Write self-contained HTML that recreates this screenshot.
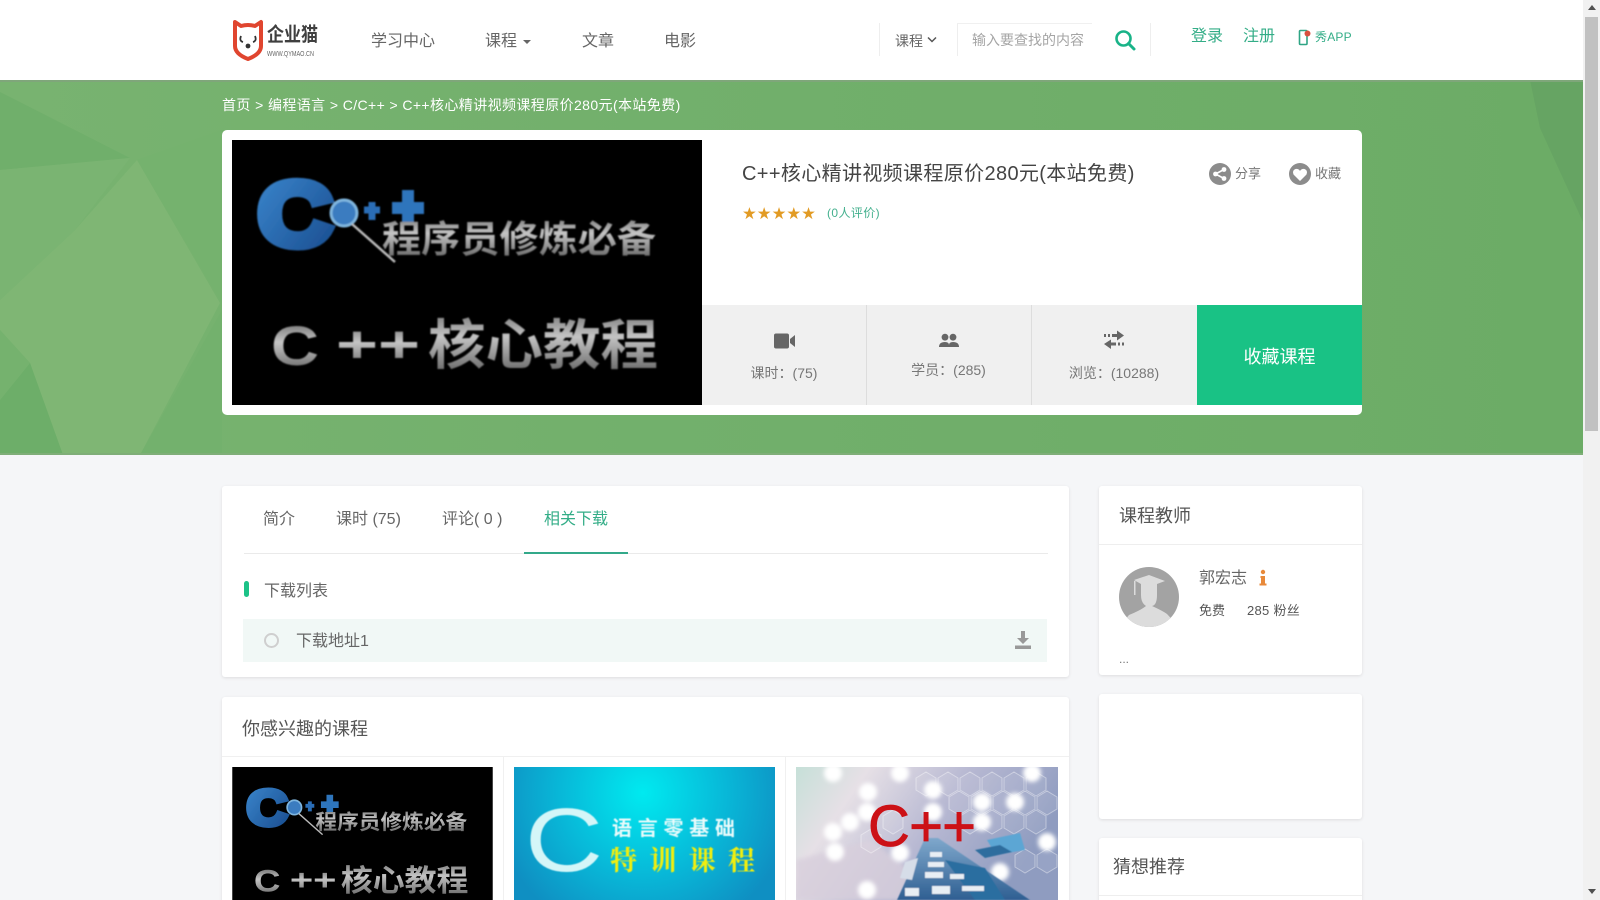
<!DOCTYPE html>
<html lang="zh"><head><meta charset="utf-8"><title>C++核心精讲视频课程</title>
<style>
*{box-sizing:border-box;margin:0;padding:0}
html,body{width:1600px;height:900px;overflow:hidden;background:#f5f6f8}
body{position:relative;font-family:"Liberation Sans","Noto Sans CJK SC",sans-serif;color:#666}
.t{position:absolute;white-space:nowrap;line-height:20px}
.b{position:absolute}
.p{position:absolute;background:#fff;border-radius:3px;box-shadow:0 1px 3px rgba(0,0,0,.1)}
svg{position:absolute;display:block;overflow:hidden}
</style></head><body>

<!-- hero -->
<svg style="left:0;top:80px" width="1583" height="375" viewBox="0 80 1583 375">
<defs><linearGradient id="hg" x1="0" x2="1" y1="0" y2="0"><stop offset="0" stop-color="#78b370"/><stop offset=".5" stop-color="#71af6b"/><stop offset="1" stop-color="#6cac66"/></linearGradient></defs>
<rect x="0" y="80" width="1583" height="375" fill="url(#hg)"/>
<polygon points="0,92 130,158 0,170" fill="#70af6b"/>
<polygon points="137,160 222,130 222,303" fill="#75b26e"/>
<polygon points="137,160 220,303 140,455 63,455 30,363 0,330 0,300 75,230" fill="#7fb674"/>
<polygon points="0,170 130,158 75,230 0,300" fill="#7ab472"/>
<polygon points="0,400 30,363 63,455 0,455" fill="#6dae69"/>
<polygon points="140,455 222,310 222,455" fill="#73b16d"/>
<polygon points="0,330 30,363 0,400" fill="#75b26e"/>
<polygon points="1530,80 1583,80 1583,222 1540,128" fill="#66a463"/>
<rect x="0" y="80" width="1583" height="2" fill="#7fa67a"/>
<rect x="0" y="453" width="1583" height="2" fill="#7fae78"/>
</svg>

<!-- header -->
<div class="b" style="left:0;top:0;width:1583px;height:80px;background:#fff"></div>
<svg style="left:232px;top:18px" width="32" height="44" viewBox="0 0 32 44">
<path d="M3 4 L9 8 Q16 6 23 8 L29 4 V28 Q29 36 16 41 Q3 36 3 28 Z" fill="#fff" stroke="#e0452f" stroke-width="4" stroke-linejoin="round"/>
<path d="M9 18 Q7 23 11 24 M23 18 Q25 23 21 24" fill="none" stroke="#333" stroke-width="1.8"/>
<circle cx="16" cy="28" r="2.4" fill="#333"/>
</svg>
<div class="t" style="left:267px;top:24px;font-size:17px;font-weight:700;color:#3f3f3f;line-height:22px;transform:scale(1,1.15);transform-origin:0 50%">企业猫</div>
<div class="t" style="left:267px;top:50px;font-size:7px;color:#666;line-height:10px;transform:scale(.79,1);transform-origin:0 50%">WWW.QYMAO.CN</div>

<div class="t" style="left:371px;top:32px;font-size:16px;color:#666">学习中心</div>
<div class="t" style="left:485px;top:32px;font-size:16px;color:#666">课程</div>
<div class="b" style="left:523px;top:40px;border:4px solid transparent;border-top:4px solid #666;border-bottom:0"></div>
<div class="t" style="left:582px;top:32px;font-size:16px;color:#666">文章</div>
<div class="t" style="left:664px;top:32px;font-size:16px;color:#666">电影</div>

<div class="b" style="left:879px;top:23px;width:1px;height:33px;background:#eee"></div>
<div class="b" style="left:957px;top:23px;width:1px;height:33px;background:#eee"></div>
<div class="b" style="left:957px;top:23px;width:135px;height:1px;background:#f0f0f0"></div>
<div class="b" style="left:1150px;top:23px;width:1px;height:33px;background:#eee"></div>
<div class="t" style="left:895px;top:31px;font-size:14px;color:#666">课程</div>
<svg style="left:927px;top:36px" width="10" height="8" viewBox="0 0 10 8"><path d="M1 1.5 L5 5.5 L9 1.5" fill="none" stroke="#555" stroke-width="1.5"/></svg>
<div class="t" style="left:972px;top:30px;font-size:14px;color:#a5a5a5">输入要查找的内容</div>
<svg style="left:1113px;top:28px" width="24" height="24" viewBox="0 0 24 24"><circle cx="10.5" cy="10.5" r="7" fill="none" stroke="#19b388" stroke-width="2.6"/><path d="M15.5 15.5 L21 21" stroke="#19b388" stroke-width="3" stroke-linecap="round"/></svg>
<div class="t" style="left:1191px;top:27px;font-size:16px;color:#33ad87">登录</div>
<div class="t" style="left:1243px;top:27px;font-size:16px;color:#33ad87">注册</div>
<svg style="left:1298px;top:29px" width="14" height="17" viewBox="0 0 14 17"><rect x="1.5" y="1.5" width="7.5" height="14" rx="1" fill="#fff" stroke="#2fa585" stroke-width="1.6"/><circle cx="9.5" cy="4.5" r="3" fill="#d8503f"/></svg>
<div class="t" style="left:1315px;top:27px;font-size:12px;color:#33ad87;letter-spacing:.2px">秀APP</div>

<!-- breadcrumb -->
<div class="t" style="left:222px;top:95px;font-size:14px;color:#fff;letter-spacing:.4px">首页 &gt; 编程语言 &gt; C/C++ &gt; C++核心精讲视频课程原价280元(本站免费)</div>

<!-- course card -->
<div class="b" style="left:222px;top:130px;width:1140px;height:285px;background:#fff;border-radius:5px"></div>
<svg style="left:232px;top:140px" width="470" height="265" viewBox="0 0 470 265">
<defs>
<linearGradient id="si" x1="0" y1="0" x2="0" y2="1"><stop offset="0" stop-color="#555"/><stop offset=".45" stop-color="#c4c4c4"/><stop offset="1" stop-color="#555"/></linearGradient>
<linearGradient id="bl" x1="0" y1="0" x2="1" y2="1"><stop offset="0" stop-color="#3b88cf"/><stop offset="1" stop-color="#184a8c"/></linearGradient>
<filter id="sb"><feGaussianBlur stdDeviation=".7"/></filter>
</defs>
<rect width="470" height="265" fill="#000"/>
<g filter="url(#sb)">
<text x="26" y="105" font-family="Liberation Sans" font-weight="700" font-size="90" fill="url(#bl)" stroke="url(#bl)" stroke-width="9" textLength="74" lengthAdjust="spacingAndGlyphs">C</text>
<circle cx="112" cy="73" r="13" fill="#3a7cc0" stroke="#7fb5de" stroke-width="3"/>
<path d="M120 84 L163 122" stroke="#bbb" stroke-width="2.5"/>
<path d="M132 70 H148 M140 62 V80" stroke="#2c6db6" stroke-width="7"/>
<path d="M160 68 H192 M176 50 V84" stroke="#2f74bc" stroke-width="12"/>
<text x="150" y="112" font-family="Noto Sans CJK SC" font-weight="700" font-size="37" fill="url(#si)" textLength="274" lengthAdjust="spacingAndGlyphs">程序员修炼必备</text>
<text x="39" y="225" font-family="Liberation Sans" font-weight="700" font-size="56" fill="url(#si)" textLength="48" lengthAdjust="spacingAndGlyphs">C</text>
<text x="104" y="222" font-family="Liberation Sans" font-weight="700" font-size="52" fill="url(#si)" textLength="84" lengthAdjust="spacingAndGlyphs">++</text>
<text x="196" y="224" font-family="Noto Sans CJK SC" font-weight="700" font-size="54" fill="url(#si)" textLength="230" lengthAdjust="spacingAndGlyphs">核心教程</text>
</g>
</svg>

<div class="t" style="left:742px;top:163px;font-size:20px;line-height:22px;color:#444;letter-spacing:.36px">C++核心精讲视频课程原价280元(本站免费)</div>
<div class="t" style="left:742px;top:204px;font-size:16.5px;color:#e29b24;line-height:20px"><span style="font-family:'DejaVu Sans'">★★★★★</span></div>
<div class="t" style="left:827px;top:203px;font-size:12px;color:#44b08e;letter-spacing:.4px">(0人评价)</div>

<svg style="left:1208px;top:162px" width="24" height="24" viewBox="0 0 24 24"><circle cx="12" cy="12" r="11" fill="#8c8c8c"/><circle cx="7.5" cy="12" r="2.4" fill="#fff"/><circle cx="16" cy="7.5" r="2.4" fill="#fff"/><circle cx="16" cy="16.5" r="2.4" fill="#fff"/><path d="M7.5 12 L16 7.5 M7.5 12 L16 16.5" stroke="#fff" stroke-width="1.6"/></svg>
<div class="t" style="left:1235px;top:164px;font-size:13px;color:#777">分享</div>
<svg style="left:1288px;top:162px" width="24" height="24" viewBox="0 0 24 24"><circle cx="12" cy="12" r="11" fill="#8c8c8c"/><path d="M12 19 L5.5 12.5 Q3.8 8.5 7.5 7 Q10.5 6.5 12 9 Q13.5 6.5 16.5 7 Q20.2 8.5 18.5 12.5 Z" fill="#fff"/></svg>
<div class="t" style="left:1315px;top:164px;font-size:13px;color:#777">收藏</div>

<div class="b" style="left:702px;top:305px;width:495px;height:100px;background:#f0f0f0"></div>
<div class="b" style="left:866px;top:305px;width:1px;height:100px;background:#ddd"></div>
<div class="b" style="left:1031px;top:305px;width:1px;height:100px;background:#ddd"></div>
<div class="b" style="left:1197px;top:305px;width:165px;height:100px;background:#19c285"></div>
<div class="t" style="left:1197px;top:347px;width:165px;text-align:center;font-size:18px;color:#fff">收藏课程</div>

<svg style="left:773px;top:332px" width="23" height="18" viewBox="0 0 23 18"><rect x="1" y="1.5" width="15" height="15" rx="2" fill="#666"/><path d="M17 7 L22 3 V15 L17 11 Z" fill="#666"/></svg>
<svg style="left:938px;top:333px" width="22" height="16" viewBox="0 0 22 16"><circle cx="7" cy="4.2" r="3.4" fill="#666"/><circle cx="15" cy="4.2" r="3.4" fill="#666"/><path d="M1 14 Q1 9 7 9 Q11 9 11 12 Q11 9 15 9 Q21 9 21 14 Z" fill="#666"/></svg>
<svg style="left:1103px;top:329px" width="22" height="22" viewBox="0 0 22 22"><path d="M1 6.5 H3 M5 6.5 H7 M9 6.5 H14" stroke="#666" stroke-width="3"/><path d="M14 1.5 L21 6.5 L14 11.5 Z" fill="#666"/><path d="M21 15 H19 M17 15 H15 M13 15 H8" stroke="#666" stroke-width="3"/><path d="M8 10.5 L1 15 L8 20 Z" fill="#666"/></svg>
<div class="t" style="left:702px;top:363px;width:164px;text-align:center;font-size:14px;color:#777">课时：(75)</div>
<div class="t" style="left:866px;top:360px;width:165px;text-align:center;font-size:14px;color:#777">学员：(285)</div>
<div class="t" style="left:1031px;top:363px;width:166px;text-align:center;font-size:14px;color:#777">浏览：(10288)</div>

<!-- tabs panel -->
<div class="p" style="left:222px;top:486px;width:847px;height:191px"></div>
<div class="t" style="left:263px;top:510px;font-size:16px">简介</div>
<div class="t" style="left:336px;top:510px;font-size:16px">课时 (75)</div>
<div class="t" style="left:442px;top:510px;font-size:16px">评论( 0 )</div>
<div class="t" style="left:544px;top:510px;font-size:16px;color:#33ad87">相关下载</div>
<div class="b" style="left:244px;top:553px;width:804px;height:1px;background:#eaeaea"></div>
<div class="b" style="left:524px;top:552px;width:104px;height:1.5px;background:#33a98a"></div>
<div class="b" style="left:244px;top:581px;width:5px;height:16px;background:#1cc287;border-radius:2.5px"></div>
<div class="t" style="left:264px;top:582px;font-size:16px">下载列表</div>
<div class="b" style="left:243px;top:619px;width:804px;height:43px;background:#f1f8f6"></div>
<div class="b" style="left:264px;top:633px;width:15px;height:15px;border:2px solid #cfcfcf;border-radius:50%"></div>
<div class="t" style="left:296px;top:632px;font-size:16px">下载地址1</div>
<svg style="left:1014px;top:630px" width="18" height="20" viewBox="0 0 18 20"><path d="M7 1 H11 V8 H15 L9 14 L3 8 H7 Z" fill="#999"/><rect x="1" y="15.5" width="16" height="3.5" fill="#999"/></svg>

<!-- interest panel -->
<div class="p" style="left:222px;top:697px;width:847px;height:230px"></div>
<div class="t" style="left:242px;top:719px;font-size:18px;color:#555">你感兴趣的课程</div>
<div class="b" style="left:222px;top:756px;width:847px;height:1px;background:#f0f0f0"></div>
<div class="b" style="left:503px;top:756px;width:1px;height:144px;background:#f0f0f0"></div>
<div class="b" style="left:785px;top:756px;width:1px;height:144px;background:#f0f0f0"></div>

<svg style="left:232px;top:767px" width="261" height="133" viewBox="0 0 470 240">
<rect width="470" height="240" fill="#000"/>
<g filter="url(#sb)">
<text x="26" y="105" font-family="Liberation Sans" font-weight="700" font-size="90" fill="url(#bl)" stroke="url(#bl)" stroke-width="9" textLength="74" lengthAdjust="spacingAndGlyphs">C</text>
<circle cx="112" cy="73" r="13" fill="#3a7cc0" stroke="#7fb5de" stroke-width="3"/>
<path d="M120 84 L163 122" stroke="#bbb" stroke-width="2.5"/>
<path d="M132 70 H148 M140 62 V80" stroke="#2c6db6" stroke-width="7"/>
<path d="M160 68 H192 M176 50 V84" stroke="#2f74bc" stroke-width="12"/>
<text x="150" y="112" font-family="Noto Sans CJK SC" font-weight="700" font-size="37" fill="url(#si)" textLength="274" lengthAdjust="spacingAndGlyphs">程序员修炼必备</text>
<text x="39" y="225" font-family="Liberation Sans" font-weight="700" font-size="56" fill="url(#si)" textLength="48" lengthAdjust="spacingAndGlyphs">C</text>
<text x="104" y="222" font-family="Liberation Sans" font-weight="700" font-size="52" fill="url(#si)" textLength="84" lengthAdjust="spacingAndGlyphs">++</text>
<text x="196" y="224" font-family="Noto Sans CJK SC" font-weight="700" font-size="54" fill="url(#si)" textLength="230" lengthAdjust="spacingAndGlyphs">核心教程</text>
</g>
</svg>

<svg style="left:514px;top:767px" width="261" height="133" viewBox="514 767 261 133">
<defs><radialGradient id="cy" gradientUnits="userSpaceOnUse" cx="643" cy="793" r="150"><stop offset="0" stop-color="#00eaf0"/><stop offset=".55" stop-color="#08b8d8"/><stop offset="1" stop-color="#0f8fc2"/></radialGradient>
<filter id="s2"><feGaussianBlur stdDeviation=".4"/></filter></defs>
<rect x="514" y="767" width="261" height="133" fill="url(#cy)"/>
<g filter="url(#s2)">
<text x="525" y="871" font-family="Liberation Sans" font-size="90" fill="#d4f6f8" textLength="78" lengthAdjust="spacingAndGlyphs">C</text>
<text x="612" y="835" font-family="Noto Sans CJK SC" font-weight="700" font-size="20" fill="#e8fbfb" textLength="123" lengthAdjust="spacing">语言零基础</text>
<text x="610" y="870" font-family="Noto Serif CJK SC" font-weight="700" font-size="27" fill="#f1ee10" textLength="145" lengthAdjust="spacing">特训课程</text>
</g>
</svg>

<svg style="left:796px;top:767px" width="262" height="133" viewBox="796 767 262 133">
<defs><linearGradient id="lv" x1="0" y1="0" x2="1" y2=".35"><stop offset="0" stop-color="#c6e0d8"/><stop offset=".25" stop-color="#e6e0e6"/><stop offset=".6" stop-color="#b7b8d2"/><stop offset="1" stop-color="#8f9cc0"/></linearGradient>
<linearGradient id="cb" x1="0" y1="0" x2="0" y2="1"><stop offset="0" stop-color="#7fa8cc"/><stop offset="1" stop-color="#2f5f92"/></linearGradient>
<filter id="bb"><feGaussianBlur stdDeviation="2"/></filter><filter id="b1"><feGaussianBlur stdDeviation=".6"/></filter></defs>
<rect x="796" y="767" width="262" height="133" fill="url(#lv)"/>
<polygon points="796,860 870,840 950,900 796,900" fill="#d8cfdc" opacity=".8" filter="url(#bb)"/>
<g fill="#fff" fill-opacity=".08" stroke="#fff" stroke-opacity=".4" stroke-width="1">
<path d="M916 778 l10 -6 l10 6 v12 l-10 6 l-10 -6z M938 778 l10 -6 l10 6 v12 l-10 6 l-10 -6z M960 778 l10 -6 l10 6 v12 l-10 6 l-10 -6z M982 778 l10 -6 l10 6 v12 l-10 6 l-10 -6z M1004 778 l10 -6 l10 6 v12 l-10 6 l-10 -6z M1026 778 l10 -6 l10 6 v12 l-10 6 l-10 -6z M949 797 l10 -6 l10 6 v12 l-10 6 l-10 -6z M971 797 l10 -6 l10 6 v12 l-10 6 l-10 -6z M993 797 l10 -6 l10 6 v12 l-10 6 l-10 -6z M1015 797 l10 -6 l10 6 v12 l-10 6 l-10 -6z M1037 797 l10 -6 l10 6 v12 l-10 6 l-10 -6z M960 816 l10 -6 l10 6 v12 l-10 6 l-10 -6z M982 816 l10 -6 l10 6 v12 l-10 6 l-10 -6z M1004 816 l10 -6 l10 6 v12 l-10 6 l-10 -6z M1026 816 l10 -6 l10 6 v12 l-10 6 l-10 -6z M1015 855 l10 -6 l10 6 v12 l-10 6 l-10 -6z M1037 855 l10 -6 l10 6 v12 l-10 6 l-10 -6z M883 816 l10 -6 l10 6 v12 l-10 6 l-10 -6z M861 835 l10 -6 l10 6 v12 l-10 6 l-10 -6z"/>
</g>
<g fill="#fff" filter="url(#bb)">
<circle cx="833" cy="773" r="9"/><circle cx="900" cy="773" r="9"/><circle cx="1032" cy="773" r="9"/><circle cx="868" cy="792" r="9"/><circle cx="933" cy="790" r="9"/><circle cx="982" cy="802" r="9"/><circle cx="1015" cy="802" r="9"/><circle cx="867" cy="812" r="9"/><circle cx="933" cy="812" r="9"/><circle cx="850" cy="822" r="9"/><circle cx="833" cy="832" r="9"/><circle cx="835" cy="852" r="9"/><circle cx="982" cy="822" r="9"/><circle cx="1047" cy="842" r="9"/><circle cx="900" cy="853" r="9"/><circle cx="1000" cy="872" r="9"/><circle cx="867" cy="890" r="9"/>
</g>
<g filter="url(#b1)">
<polygon points="925,838 938,838 1030,900 897,900" fill="url(#cb)"/>
<polygon points="945,860 985,868 1005,900 975,900" fill="#2b6ea0"/>
<polygon points="987,840 1020,833 1025,850 996,855" fill="#5ba6d4"/>
<polygon points="1000,845 1012,852 985,858 975,850" fill="#2f6d9e"/>
<g fill="#e8eef4">
<rect x="930" y="852" width="12" height="5"/><rect x="928" y="862" width="16" height="5"/><rect x="925" y="872" width="18" height="6"/><rect x="932" y="886" width="18" height="8"/><rect x="905" y="888" width="14" height="8"/><rect x="950" y="874" width="14" height="5"/><rect x="962" y="886" width="22" height="5"/>
</g>
<polygon points="905,862 918,858 912,880 900,878" fill="#d6dde8"/>
</g>
<text x="868" y="846" font-family="Liberation Sans" font-size="58" fill="#cc1116" stroke="#cc1116" stroke-width=".8" textLength="108" lengthAdjust="spacing">C++</text>
</svg>

<!-- right column -->
<div class="p" style="left:1099px;top:486px;width:263px;height:189px"></div>
<div class="t" style="left:1119px;top:506px;font-size:18px;color:#555">课程教师</div>
<div class="b" style="left:1099px;top:544px;width:263px;height:1px;background:#eeeeee"></div>
<svg style="left:1119px;top:567px" width="60" height="60" viewBox="0 0 60 60">
<defs><clipPath id="ac"><circle cx="30" cy="30" r="30"/></clipPath></defs>
<g clip-path="url(#ac)"><rect width="60" height="60" fill="#a3a3a3"/>
<path d="M15 13 L30 8 L46 14 L38 17 V28 Q38 38 33 39 Q44 44 48 47 L60 60 H0 L10 48 Q22 43 27 39 Q22 36 22 28 V17 Z" fill="#dcdcdc"/>
<rect x="15" y="14" width="1.5" height="14" fill="#dcdcdc"/></g></svg>
<div class="t" style="left:1199px;top:569px;font-size:16px;color:#666">郭宏志</div>
<svg style="left:1258px;top:569px" width="10" height="18" viewBox="0 0 10 18"><circle cx="5" cy="3" r="2.2" fill="#e8893a"/><path d="M2.5 7 H7 V14.5 H8.5 V16.5 H1.5 V14.5 H3 V9 H2.5 Z" fill="#e8893a"/></svg>
<div class="t" style="left:1199px;top:601px;font-size:13px;color:#555">免费</div>
<div class="t" style="left:1247px;top:601px;font-size:13px;color:#555;letter-spacing:.3px">285 粉丝</div>
<div class="t" style="left:1119px;top:649px;font-size:12px;color:#777">...</div>

<div class="p" style="left:1099px;top:694px;width:263px;height:125px"></div>

<div class="p" style="left:1099px;top:838px;width:263px;height:90px"></div>
<div class="t" style="left:1113px;top:857px;font-size:18px;color:#555">猜想推荐</div>
<div class="b" style="left:1099px;top:895px;width:263px;height:1px;background:#eeeeee"></div>

<!-- scrollbar -->
<div class="b" style="left:1583px;top:0;width:17px;height:900px;background:#f1f1f1"></div>
<div class="b" style="left:1585px;top:17px;width:13px;height:414px;background:#c1c1c1"></div>
<div class="b" style="left:1588px;top:5px;border:4px solid transparent;border-bottom:5px solid #505050;border-top:0"></div>
<div class="b" style="left:1588px;top:889px;border:4px solid transparent;border-top:5px solid #505050;border-bottom:0"></div>
</body></html>
